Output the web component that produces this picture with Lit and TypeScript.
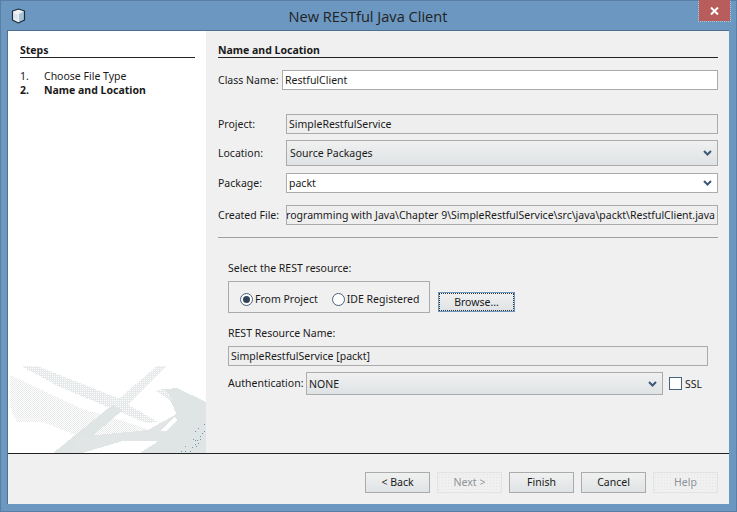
import {LitElement, html, css, svg} from 'lit';
import {customElement} from 'lit/decorators.js';

const chevron = html`<svg class="chev" width="9" height="6" viewBox="0 0 9 6"><path d="M1 1 4.5 4.5 8 1" fill="none" stroke="#3d5a78" stroke-width="2"/></svg>`;

const dots = [[204,424],[198,428],[195,431],[204,431],[200,436],[202,433],[193,439],[195,440],[197,440],[200,439],[198,443],[195,444],[192,447],[185,446],[196,446],[190,451],[181,451],[185,451]];

const watermark = html`<svg class="mark" width="198" height="87" viewBox="8 366 198 87" shape-rendering="crispEdges">
  <defs>
    <pattern id="dith" width="2" height="2" patternUnits="userSpaceOnUse">
      <rect width="1" height="1" fill="#e8eaea"/>
      <rect x="1" y="1" width="1" height="1" fill="#e8eaea"/>
    </pattern>
    <pattern id="dith2" width="2" height="2" patternUnits="userSpaceOnUse">
      <rect width="2" height="2" fill="#e6e9e9"/>
      <rect width="1" height="1" fill="#fff"/>
    </pattern>
  </defs>
  <path d="M10 375 80 408 103 415 148 429 150 437 80 437 43 422 17 422 10 407Z" fill="url(#dith)"/>
  <path d="M21 366H37L115 397 158 422 147 423 110 408 60 387Z" fill="url(#dith2)"/>
  <path d="M166 366H157L100 415 53 453H72L123 410Z" fill="url(#dith2)"/>
  <path d="M100 415 53 453H72L123 410 113 405Z" fill="#dfe4e5"/>
  <path d="M77 437 148 430 178 413V420L157 441H123L82 453H72Z" fill="#e1e5e6"/>
  <path d="M155 390 177 388 206 402V453H140L157 442 178 417 170 400Z" fill="#dfe4e5"/>
  <path d="M122 452 146 442H152L132 452Z" fill="#fff"/>
  <path d="M160 431 175 417 177 420 166 431Z" fill="#fff"/>
  <path d="M155 390H166L172 400 162 394Z" fill="url(#dith2)"/>
  ${dots.map(([x, y]) => svg`<rect x=${x} y=${y} width="1" height="1" fill="#6b97c1"/>`)}
</svg>`;

@customElement('app-root')
export class AppRoot extends LitElement {
  static styles = css`
    :host {
      display: block;
      width: 737px;
      height: 512px;
      font-family: "Noto Sans", "DejaVu Sans", sans-serif;
      font-size: 10.5px;
      color: #1a1a1a;
    }
    * { box-sizing: border-box; }

    .window {
      width: 737px;
      height: 512px;
      background: #6b97c1;
      border: 1px solid #5a7fa5;
      display: flex;
      flex-direction: column;
      padding: 0 7px 7px 6px;
    }
    .titlebar {
      height: 29px;
      flex: none;
      display: flex;
      align-items: center;
      position: relative;
      font-family: "Open Sans", "Noto Sans", sans-serif;
      font-size: 14.6px;
      color: #222;
    }
    .titlebar .icon { position: absolute; left: 4px; top: 7px; }
    .titlebar .title { flex: 1; text-align: center; }
    .close {
      position: absolute;
      right: -1px;
      top: -1px;
      width: 31px;
      height: 21px;
      background: #b85c5c;
      outline: 1px dotted #b7c4ce;
      display: flex;
      align-items: center;
      justify-content: center;
    }

    .client {
      flex: 1;
      background: #f0f0f0;
      border: 1px solid #4f7191;
      border-width: 1px 0 0 1px;
      display: flex;
      flex-direction: column;
      min-height: 0;
    }
    .main {
      height: 423px;
      flex: none;
      display: flex;
      border-bottom: 1px solid #222;
    }
    .steps {
      width: 198px;
      flex: none;
      background: #fff;
      display: flex;
      flex-direction: column;
      padding: 12px 0 0 0;
    }
    .steps h3 {
      margin: 0 11px 0 12px;
      font-size: 10.5px;
      font-weight: 700;
      line-height: 15px;
      height: 15px;
      border-bottom: 1px solid #222;
    }
    .steps ol {
      list-style: none;
      margin: 11px 0 0 12px;
      padding: 0;
    }
    .steps li { display: flex; line-height: 14px; }
    .steps li span { width: 24px; }
    .steps li.on { font-weight: 700; }
    .mark { margin-top: auto; display: block; flex: none; }

    .panel {
      flex: 1;
      min-width: 0;
      padding: 12px 11px 0 12px;
      display: flex;
      flex-direction: column;
    }
    .panel h3 {
      margin: 0;
      font-size: 10.5px;
      font-weight: 700;
      line-height: 15px;
      height: 15px;
      flex: none;
      border-bottom: 1px solid #222;
    }
    .row { display: flex; align-items: center; flex: none; }
    .row label { flex: none; }
    .field {
      height: 20px;
      border: 1px solid #ababab;
      background: #fff;
      display: flex;
      align-items: center;
      padding: 0 2px;
      flex: 1;
      min-width: 0;
      overflow: hidden;
      white-space: nowrap;
    }
    .field.ro { background: #eeeeee; }
    .combo {
      background-color: #e8eaea;
      background-image:
        radial-gradient(#f6f6f6 0.5px, transparent 0.6px),
        linear-gradient(#f0f0f0, #dfe3e5);
      background-size: 2px 2px, 100% 100%;
      justify-content: space-between;
      padding-right: 5px;
    }
    .combo.white { background: #fff; }
    .chev { flex: none; }

    .r-class { margin-top: 12px; }
    .r-class label { width: 64px; }
    .r-project { margin-top: 24px; }
    .r-project label, .r-location label, .r-package label, .r-file label { width: 68px; }
    .r-location { margin-top: 6px; }
    .r-location .field { height: 26px; padding-left: 3px; }
    .r-package { margin-top: 7px; }
    .r-file { margin-top: 12px; }
    .r-file .field { justify-content: flex-end; }
    .sep { height: 1px; background: #a0a0a0; margin-top: 12px; flex: none; }

    .sub { margin: 0 0 0 10px; flex: none; }
    .select-label { margin-top: 23px; line-height: 14px; }
    .resource { margin: 6px 0 0 10px; display: flex; align-items: flex-start; flex: none; }
    .group {
      width: 202px;
      height: 32px;
      border: 1px solid #ababab;
      display: flex;
      align-items: center;
      padding: 4px 0 0 11px;
      white-space: nowrap;
    }
    .opt { display: flex; align-items: center; gap: 2px; }
    .opt + .opt { margin-left: 14px; }
    .radio {
      width: 13px;
      height: 13px;
      border-radius: 50%;
      border: 1px solid #46627f;
      background: #fff;
      flex: none;
      display: flex;
      align-items: center;
      justify-content: center;
    }
    .radio i { width: 7px; height: 7px; border-radius: 50%; background: #2f4459; display: block; }
    .btn {
      width: 65px;
      height: 21px;
      border: 1px solid #ababab;
      background-color: #e8eaea;
      background-image:
        radial-gradient(#f6f6f6 0.5px, transparent 0.6px),
        linear-gradient(#f0f0f0, #dfe3e5);
      background-size: 2px 2px, 100% 100%;
      display: flex;
      align-items: center;
      justify-content: center;
      flex: none;
    }
    .footer .btn { padding-bottom: 1px; }
    .btn.off {
      color: #8f9499;
      border-color: #e2e4e4;
      background-color: #f0f0f0;
      background-image: radial-gradient(#e4e6e6 0.5px, transparent 0.6px);
      background-size: 3px 3px;
    }
    .btn.browse {
      width: 77px;
      height: 20px;
      margin: 11px 0 0 8px;
      border-color: #6b97c1;
      outline: 1px dotted #333;
      outline-offset: -2px;
    }
    .name-label { margin-top: 13px; line-height: 14px; }
    .r-name { margin: 6px 10px 0 10px; }
    .r-auth { margin: 6px 0 0 10px; }
    .r-auth label { width: 78px; padding-bottom: 2px; }
    .r-auth .field { flex: none; width: 357px; height: 23px; }
    .check { width: 13px; height: 13px; border: 1px solid #46627f; background: #fff; margin: 0 3px 0 6px; flex: none; }

    .footer {
      flex: 1;
      display: flex;
      justify-content: flex-end;
      gap: 7px;
      padding: 18px 11px 0 0;
    }
  `;

  protected render() {
    return html`
      <div class="window">
        <div class="titlebar">
          <svg class="icon" width="15" height="16" viewBox="0 0 15 16">
            <path d="M7.5 1 13.5 3V12L7.5 15 1.5 12V3Z" fill="#eef2f5"/>
            <path d="M8 6V15L13.5 12V3Z" fill="#a9c2d6"/>
            <path d="M3 5 7 7V12L3 10Z" fill="#dbe5ec"/>
            <path d="M7.5 1 13.5 3V12L7.5 15 1.5 12V3Z" fill="none" stroke="#1d2c3a" stroke-width="1.2" stroke-linejoin="round"/>
          </svg>
          <div class="title">New RESTful Java Client</div>
          <div class="close">
            <svg width="9" height="8" viewBox="0 0 9 8"><path d="M1 0.5 8 7.5M8 0.5 1 7.5" stroke="#fff" stroke-width="2"/></svg>
          </div>
        </div>
        <div class="client">
          <div class="main">
            <div class="steps">
              <h3>Steps</h3>
              <ol>
                <li><span>1.</span>Choose File Type</li>
                <li class="on"><span>2.</span>Name and Location</li>
              </ol>
              ${watermark}
            </div>
            <div class="panel">
              <h3>Name and Location</h3>
              <div class="row r-class"><label>Class Name:</label><div class="field">RestfulClient</div></div>
              <div class="row r-project"><label>Project:</label><div class="field ro">SimpleRestfulService</div></div>
              <div class="row r-location"><label>Location:</label><div class="field combo">Source Packages ${chevron}</div></div>
              <div class="row r-package"><label>Package:</label><div class="field combo white">packt ${chevron}</div></div>
              <div class="row r-file"><label>Created File:</label><div class="field ro">programming with Java\\Chapter 9\\SimpleRestfulService\\src\\java\\packt\\RestfulClient.java</div></div>
              <div class="sep"></div>
              <div class="sub select-label">Select the REST resource:</div>
              <div class="resource">
                <div class="group">
                  <div class="opt"><span class="radio"><i></i></span>From Project</div>
                  <div class="opt"><span class="radio"></span>IDE Registered</div>
                </div>
                <div class="btn browse">Browse...</div>
              </div>
              <div class="sub name-label">REST Resource Name:</div>
              <div class="row r-name"><div class="field ro">SimpleRestfulService [packt]</div></div>
              <div class="row r-auth">
                <label>Authentication:</label>
                <div class="field combo">NONE ${chevron}</div>
                <span class="check"></span>SSL
              </div>
            </div>
          </div>
          <div class="footer">
            <div class="btn">&lt; Back</div>
            <div class="btn off">Next &gt;</div>
            <div class="btn">Finish</div>
            <div class="btn">Cancel</div>
            <div class="btn off">Help</div>
          </div>
        </div>
      </div>
    `;
  }
}
